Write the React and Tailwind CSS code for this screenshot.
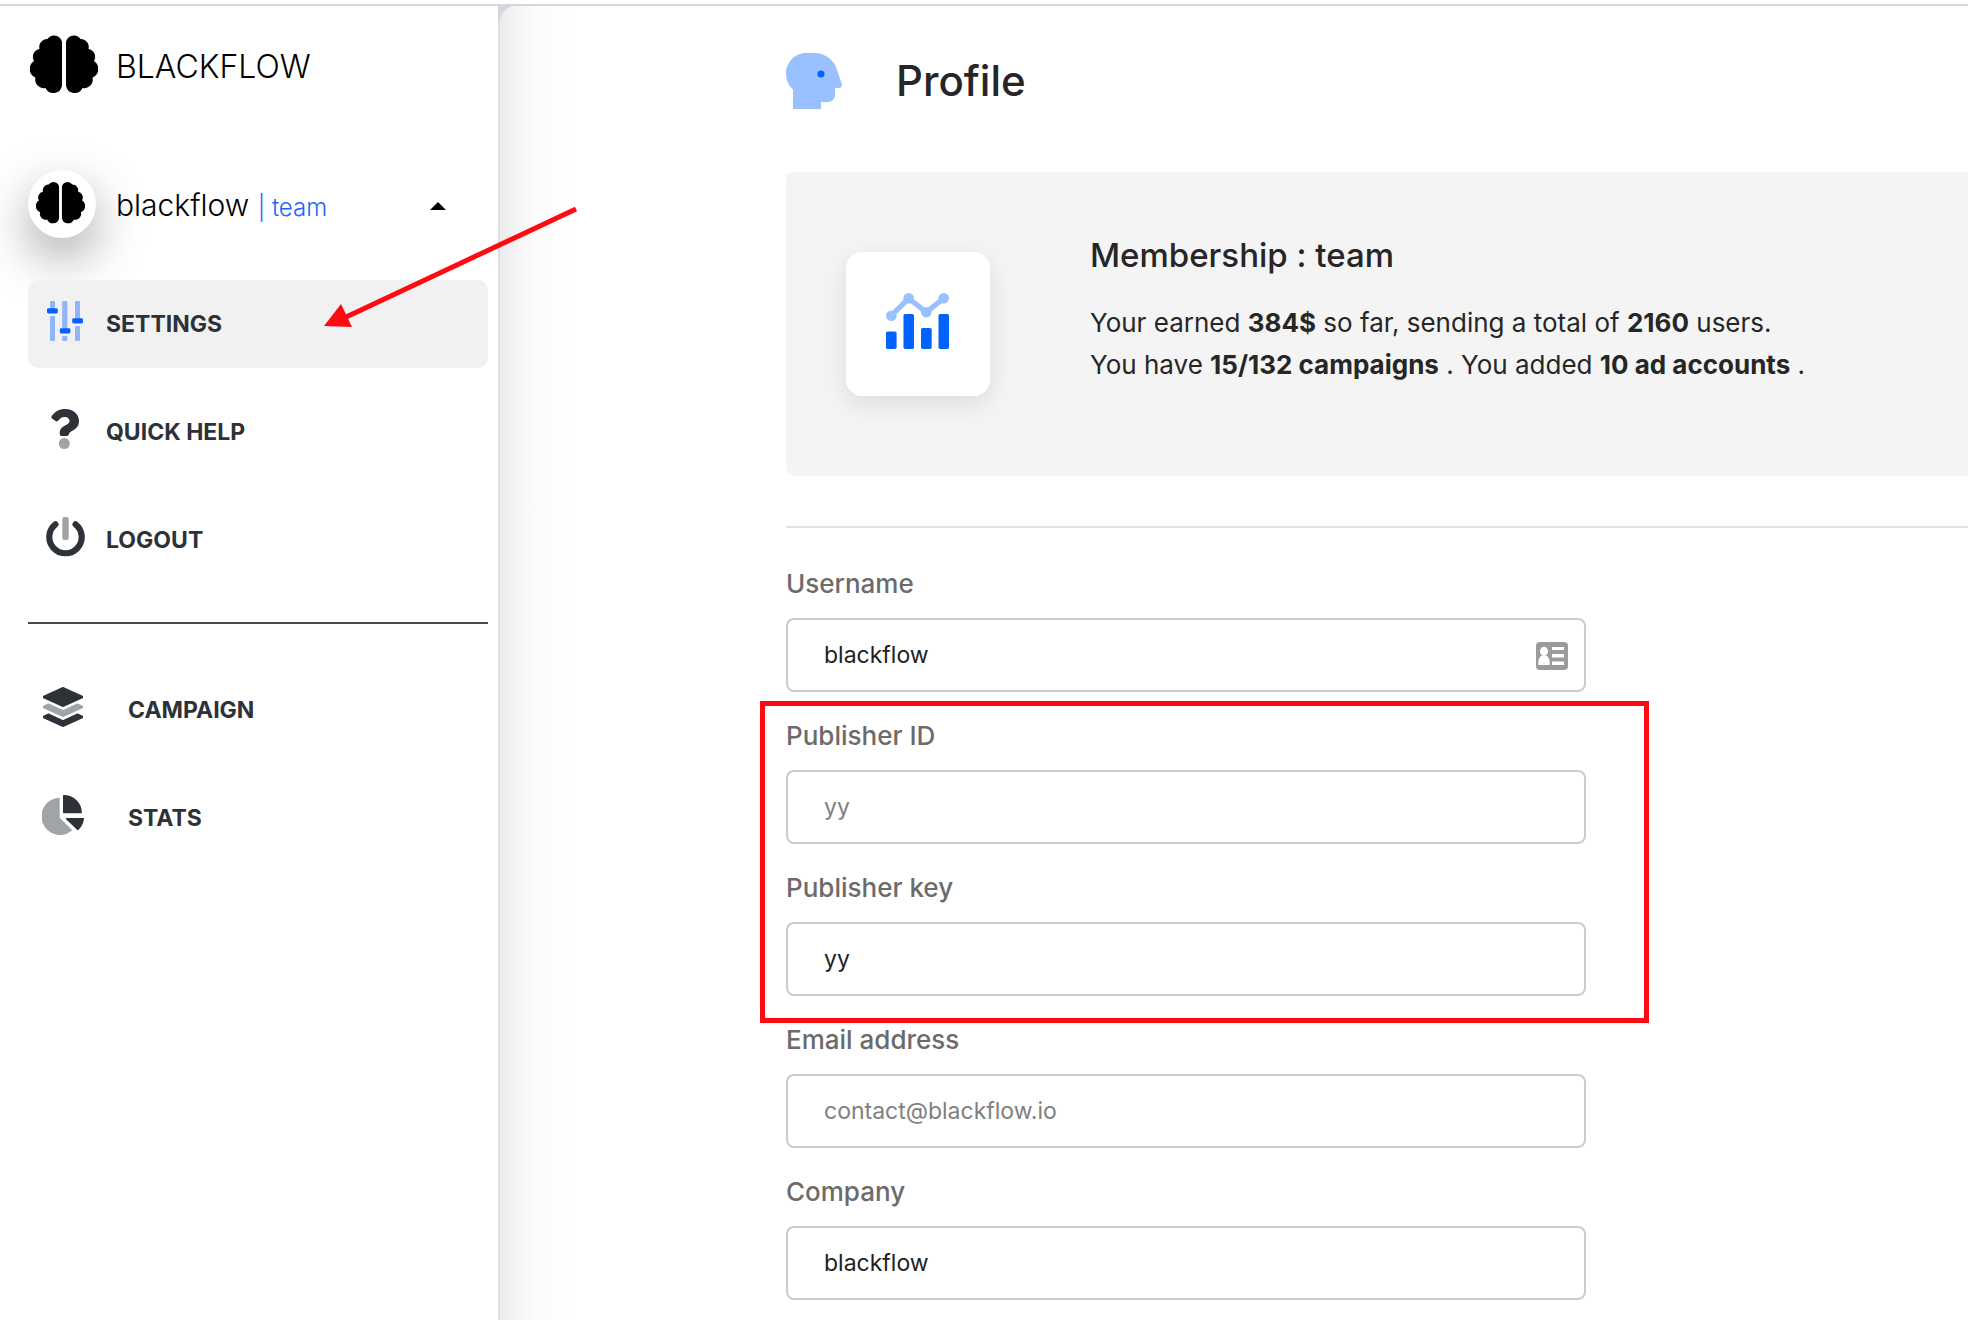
import React from "react";

function Brain({ className }) {
  const half =
    "M32 8 A8 8 0 0 0 17.5 5 A8 8 0 0 0 9.5 15 A8 8 0 0 0 4 27 A9.3 9.3 0 0 0 5.5 43.5 A8.5 8.5 0 0 0 15.5 54 A8.7 8.7 0 0 0 32 51.5 Z";
  return (
    <svg viewBox="0 0 68 60" className={className} aria-hidden="true">
      <path d={half} />
      <path d={half} transform="translate(68 0) scale(-1 1)" />
    </svg>
  );
}

function SlidersIcon() {
  return (
    <svg viewBox="0 0 36 40" className="h-10 w-9" aria-hidden="true">
      <g fill="#8fb4f7">
        <rect x="3" y="0" width="5" height="9" rx="1" />
        <rect x="3" y="15" width="5" height="25" rx="1" />
        <rect x="15.2" y="0" width="5.2" height="28" rx="1" />
        <rect x="15.2" y="35" width="5.2" height="5" rx="1" />
        <rect x="28" y="0" width="5" height="19" rx="1" />
        <rect x="28" y="25" width="5" height="15" rx="1" />
      </g>
      <g fill="#0a5dff">
        <rect x="0" y="7.3" width="10.8" height="5.2" rx="1.4" />
        <rect x="12.8" y="27.3" width="10.6" height="5.2" rx="1.4" />
        <rect x="25.2" y="17.3" width="10.8" height="5.2" rx="1.4" />
      </g>
    </svg>
  );
}

function QuestionIcon() {
  return (
    <svg viewBox="0 0 28 40" className="h-10 w-7" aria-hidden="true">
      <path
        fill="#2d3238"
        d="M0.8 7C4 2.5 8.5 0 14 0C21.5 0 28 4.5 28 12C28 21.5 18.500 21.5 18 25Q17.500 27 15.800 27H10.500Q8.700 27 8.700 25V23.500C9 16 18.500 16.5 18.500 12C18.500 9.500 16 8 13.500 8C10.5 8 9 9.500 7 11.8Q5.800 13 4.5 12L1 9.500Q-0.300 8.500 0.800 7Z"
      />
      <circle cx="13.3" cy="34.5" r="5.500" fill="#a0a4a7" />
    </svg>
  );
}

function PowerIcon() {
  return (
    <svg viewBox="0 0 39 40" className="h-10 w-[39px]" aria-hidden="true">
      <path
        d="M9.4 7.4A16.200 16.200 0 1 0 29.600 7.4"
        fill="none"
        stroke="#2d3238"
        strokeWidth="6.2"
        strokeLinecap="round"
      />
      <rect x="16.3" y="0" width="6.4" height="23" rx="2" fill="#a0a4a7" />
    </svg>
  );
}

function LayersIcon() {
  return (
    <svg viewBox="0 0 40 40" className="size-10" strokeWidth="1.4" strokeLinejoin="round" aria-hidden="true">
      <path d="M20 0.7L39.3 9.5V10.5L20 19.3L0.7 10.5V9.5Z" fill="#2d3238" stroke="#2d3238" />
      <path d="M5.5 17.2L20 23.8L34.5 17.2L39.3 19.5V20.5L20 29.3L0.7 20.5V19.5Z" fill="#a0a4a7" stroke="#a0a4a7" />
      <path d="M5.5 27.2L20 33.8L34.5 27.2L39.3 29.5V30.5L20 39.3L0.7 30.5V29.5Z" fill="#2d3238" stroke="#2d3238" />
    </svg>
  );
}

function PieIcon() {
  return (
    <svg viewBox="0 0 42 40" className="h-10 w-[42px]" strokeWidth="1.4" strokeLinejoin="round" aria-hidden="true">
      <path d="M17 3.5A17.900 17.900 0 1 0 29.3 35.3L17 23Z" fill="#a0a4a7" stroke="#a0a4a7" />
      <path d="M21.7 0.7A17.500 17.500 0 0 1 39.2 17.6H21.7Z" fill="#2d3238" stroke="#2d3238" />
      <path d="M24.5 23.7H41.3A17 17 0 0 1 35.8 34.4Z" fill="#2d3238" stroke="#2d3238" />
    </svg>
  );
}

function HeadIcon() {
  return (
    <svg viewBox="0 0 56 56" className="size-14" aria-hidden="true">
      <path
        d="M20 0H29C39 0 48 7 50.8 16L55.8 31C56.4 33 55 35 53 35H49V42A7 7 0 0 1 42 49H35V56H7V36.5C2.5 32.5 0 27 0 20.5C0 9 9 0 20 0Z"
        fill="#99c1ff"
      />
      <circle cx="35" cy="21" r="3.5" fill="#0062ff" />
    </svg>
  );
}

function ChartIcon() {
  return (
    <svg viewBox="0 0 63 56" className="h-14 w-[63px]" aria-hidden="true">
      <g fill="#0062ff">
        <rect x="0" y="38.4" width="10.6" height="17.6" rx="1.7" />
        <rect x="17.5" y="21" width="10.5" height="35" rx="1.7" />
        <rect x="35" y="35" width="10.7" height="21" rx="1.7" />
        <rect x="52.5" y="21" width="10.5" height="35" rx="1.7" />
      </g>
      <path d="M5.3 22.7L22.7 5.3L40.3 19.3L57.7 5.3" fill="none" stroke="#99c1ff" strokeWidth="5.2" />
      <g fill="#99c1ff">
        <circle cx="5.3" cy="22.7" r="5.3" />
        <circle cx="22.7" cy="5.3" r="5.3" />
        <circle cx="40.3" cy="19.3" r="5.3" />
        <circle cx="57.7" cy="5.3" r="5.3" />
      </g>
    </svg>
  );
}

function ContactCardIcon() {
  return (
    <svg viewBox="0 0 32 28" className="h-7 w-8" aria-hidden="true">
      <rect width="32" height="28" rx="4" fill="#9b9b9b" />
      <g fill="#fff">
        <ellipse cx="8" cy="9.3" rx="4" ry="4.6" />
        <path d="M2.3 23V20C2.3 16 5 13.5 6.3 13.5H9.7C11 13.5 13.7 16 13.7 20V23Z" />
        <rect x="16" y="5" width="12" height="3" />
        <rect x="16" y="12" width="12" height="3.5" />
        <rect x="16" y="19.5" width="12" height="3.5" />
      </g>
    </svg>
  );
}

function Arrow() {
  return (
    <svg viewBox="0 0 262 130" className="pointer-events-none absolute -top-20 left-72 z-20 h-[130px] w-[262px]" aria-hidden="true">
      <path d="M260 9L28 118" stroke="#ff0a12" strokeWidth="5" />
      <path d="M8 126L25 104L36 127Z" fill="#ff0a12" />
    </svg>
  );
}

function NavItem({ icon, label, active = false, wide = false, children }) {
  return (
    <li className="relative">
      <a
        href="#"
        className={`flex h-[88px] items-center rounded-[10px] text-[23px] font-bold text-[#2d3238] ${active ? "bg-[#f1f1f1]" : ""}`}
      >
        <span className={`flex shrink-0 justify-center pb-1.5 ${wide ? "mr-[22px] w-[78px] pr-5 pl-3" : "w-[78px] pr-5 pl-4"}`}>
          <span className="flex shrink-0">{icon}</span>
        </span>
        {label}
      </a>
      {children}
    </li>
  );
}

function Sidebar() {
  return (
    <aside className="w-[500px] shrink-0 border-r-2 border-[#dedede] bg-white pr-2.5 pl-7">
      <div className="flex items-center pt-7">
        <Brain className="ml-0.5 h-[60px] w-[68px]" />
        <span className="ml-[18px] pt-1.5 text-[32px] leading-[54px] font-light text-black">BLACKFLOW</span>
      </div>
      <button type="button" className="mt-[76px] flex w-full items-center text-left">
        <span className="flex size-[68px] items-center justify-center rounded-full bg-white pr-1 pb-1 shadow-[0_20px_50px_rgba(0,0,0,0.35)]">
          <Brain className="h-[43px] w-[49px]" />
        </span>
        <span className="ml-5 pt-0.5 text-[30px] leading-9 font-light text-black">
          blackflow <span className="text-2xl font-light text-[#1a66ff]">| team</span>
        </span>
        <svg viewBox="0 0 16 8" className="mt-1 mr-[42px] ml-auto h-2 w-4" aria-hidden="true">
          <path d="M8 0L16 8H0Z" />
        </svg>
      </button>
      <nav>
        <ul className="relative mt-[42px] flex flex-col gap-5">
          <NavItem icon={<SlidersIcon />} label="SETTINGS" active>
            <Arrow />
          </NavItem>
          <NavItem icon={<QuestionIcon />} label="QUICK HELP" />
          <NavItem icon={<PowerIcon />} label="LOGOUT" />
        </ul>
        <hr className="mt-[38px] border-t-2 border-[#434a54]" />
        <ul className="mt-[42px] flex flex-col gap-5">
          <NavItem icon={<LayersIcon />} label="CAMPAIGN" wide />
          <NavItem icon={<PieIcon />} label="STATS" wide />
        </ul>
      </nav>
    </aside>
  );
}

function Field({ id, label, value, placeholder, icon }) {
  return (
    <div className="pt-[26px]">
      <label htmlFor={id} className="mb-4 block text-[26px] leading-9 font-medium text-[#6b6b6b]">
        {label}
      </label>
      <div className="relative">
        <input
          id={id}
          type="text"
          defaultValue={value}
          placeholder={placeholder}
          className="block h-[74px] w-full rounded-lg border-2 border-[#cbcbcb] bg-white px-9 text-[23px] text-[#222] placeholder:text-[#808080]"
        />
        {icon && <span className="absolute top-6 right-[18px]">{icon}</span>}
      </div>
    </div>
  );
}

export default function App() {
  return (
    <div className="flex min-h-screen flex-col overflow-x-hidden bg-white pt-1 font-['Inter','Noto_Sans',sans-serif]">
      <div className="flex grow border-t-2 border-[#d5d6dc]">
        <Sidebar />
        <div className="-ml-0.5 min-w-0 grow bg-[#d5d6dc]">
          <main className="h-full rounded-tl-[18px] border-l-2 border-[#dedede] bg-white bg-[linear-gradient(to_right,#ececec,#f6f6f6_20px,#fcfcfc_40px,#ffffff_70px)] pb-5 pl-[286px]">
            <header className="flex items-center pt-[47px]">
              <HeadIcon />
              <h1 className="ml-[54px] text-[42px] leading-[56px] font-medium text-[#262626]">Profile</h1>
            </header>
            <section className="mt-[63px] flex h-[304px] rounded-l-lg bg-[#f4f4f4] pl-[60px]">
              <div className="mt-20 flex size-36 shrink-0 items-center justify-center rounded-2xl bg-white pr-0.5 pb-1.5 shadow-[0_8px_26px_rgba(0,0,0,0.1)]">
                <ChartIcon />
              </div>
              <div className="ml-[100px] pt-[60px] text-[#262626]">
                <h2 className="text-[33px] leading-[46px] font-medium">Membership : team</h2>
                <p className="mt-6 text-[26px] leading-[42px]">
                  Your earned <b>384$</b> so far, sending a total of <b>2160</b> users.
                  <br />
                  You have <b>15/132 campaigns</b> . You added <b>10 ad accounts</b> .
                </p>
              </div>
            </section>
            <hr className="mt-[50px] mb-3 border-t-2 border-[#e1e1e1]" />
            <form className="max-w-[800px]">
              <Field id="username" label="Username" value="blackflow" icon={<ContactCardIcon />} />
              <div className="relative">
                <Field id="publisher-id" label="Publisher ID" placeholder="yy" />
                <Field id="publisher-key" label="Publisher key" value="yy" />
                <div className="pointer-events-none absolute top-[9px] -right-[63px] -bottom-[27px] -left-[26px] border-5 border-[#ff0a12]" />
              </div>
              <Field id="email" label="Email address" placeholder="contact@blackflow.io" />
              <Field id="company" label="Company" value="blackflow" />
            </form>
          </main>
        </div>
      </div>
    </div>
  );
}
